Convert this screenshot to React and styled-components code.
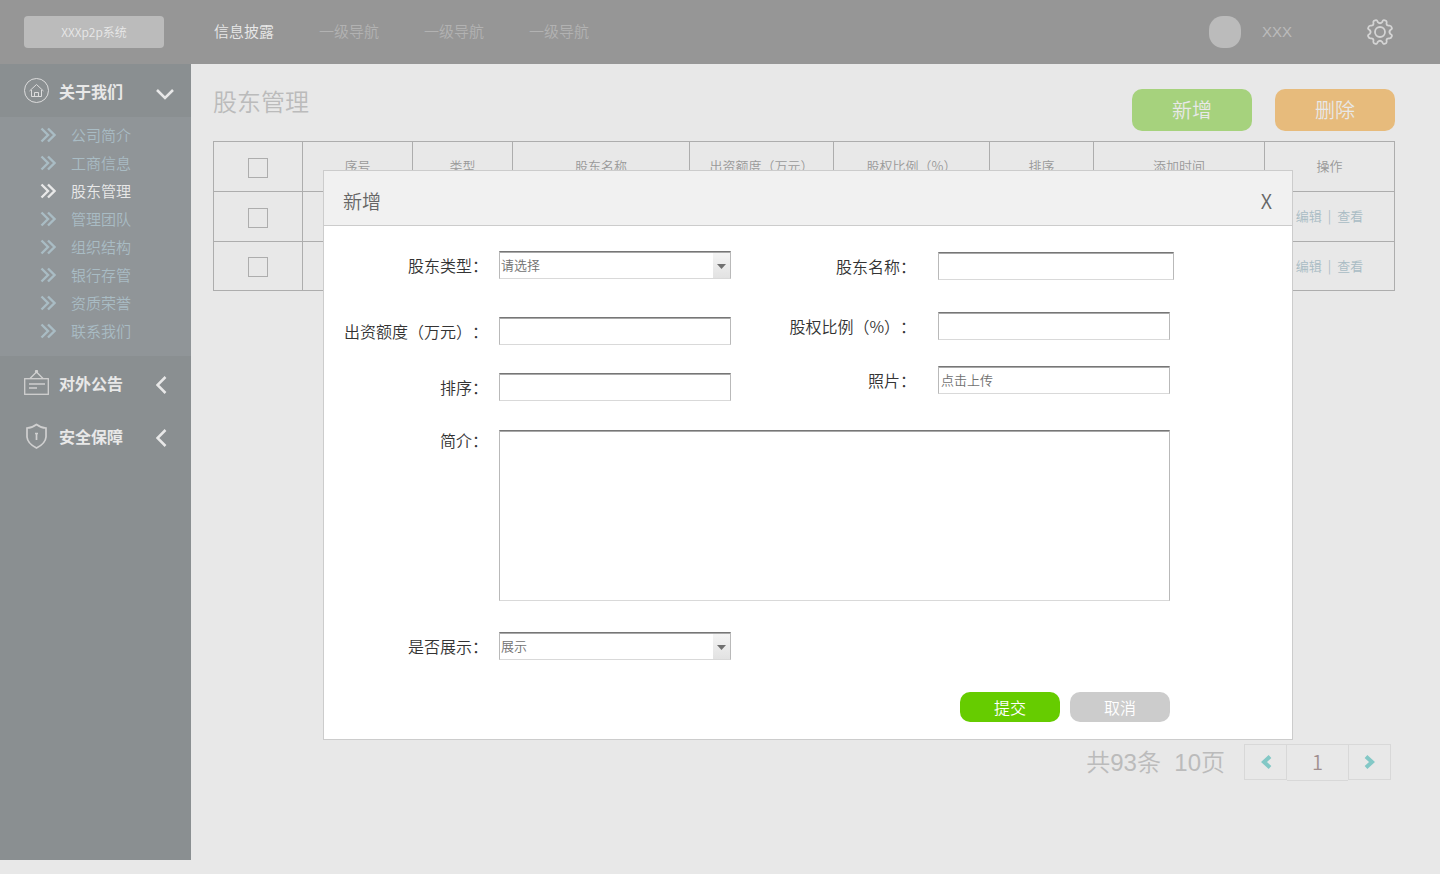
import React, { useState } from "react";
import styled, { createGlobalStyle } from "styled-components";

const GlobalStyle = createGlobalStyle`
  * {
    box-sizing: border-box;
  }

  body {
    margin: 0;
    background-color: #e8e8e8;
    font-family: "Noto Sans CJK SC", sans-serif;
    font-weight: 350;
    text-spacing-trim: space-all;
  }

  button,
  input,
  select,
  textarea {
    font-family: inherit;
    font-weight: inherit;
  }

  a {
    text-decoration: none;
  }
`;

const navItems = ["信息披露", "一级导航", "一级导航", "一级导航"];

const aboutItems = [
  "公司简介",
  "工商信息",
  "股东管理",
  "管理团队",
  "组织结构",
  "银行存管",
  "资质荣誉",
  "联系我们",
];

const columns = [
  { title: "序号", width: 110 },
  { title: "类型", width: 100 },
  { title: "股东名称", width: 177 },
  { title: "出资额度（万元）", width: 144 },
  { title: "股权比例（%）", width: 156 },
  { title: "排序", width: 104 },
  { title: "添加时间", width: 171 },
  { title: "操作", width: 130 },
];

const GearIcon = () => (
  <svg width="28" height="28" viewBox="0 0 28 28" fill="none" stroke="#d4d4d4" strokeWidth="1.8" strokeLinejoin="round">
    <path d="M11.6 3.9 Q14 6.6 16.4 3.9 Q17 1.4 19 2.4 L20.3 3 Q21 3.6 20.5 6 Q20.8 8 23.6 7.6 Q25 7.6 25.8 9.6 Q26.4 11 24.4 12 Q22.4 14 24.4 16 Q26.4 17 25.8 18.4 Q25 20.4 23.6 20.4 Q20.8 20 20.5 22 Q21 24.4 20.3 25 L19 25.6 Q17 26.6 16.4 24.1 Q14 21.4 11.6 24.1 Q11 26.6 9 25.6 L7.7 25 Q7 24.4 7.5 22 Q7.2 20 4.4 20.4 Q3 20.4 2.2 18.4 Q1.6 17 3.6 16 Q5.6 14 3.6 12 Q1.6 11 2.2 9.6 Q3 7.6 4.4 7.6 Q7.2 8 7.5 6 Q7 3.6 7.7 3 L9 2.4 Q11 1.4 11.6 3.9 Z" />
    <circle cx="14" cy="14" r="5" />
  </svg>
);

const HomeIcon = () => (
  <svg width="25" height="25" viewBox="0 0 25 25" fill="none" stroke="#dcdcdc">
    <circle cx="12.5" cy="12.5" r="12" />
    <path d="M5.5 13 L12.5 6.5 L19.5 13 M7.5 12 V18.5 H17.5 V12 M10.5 18.5 V14.5 H14.5 V18.5" />
  </svg>
);

const NoticeIcon = () => (
  <svg width="25" height="26" viewBox="0 0 25 26" fill="none" stroke="#d0d0d0" strokeWidth="1.3">
    <rect x="0.7" y="8.7" width="23.6" height="15.6" />
    <path d="M6 8.5 L12.5 2 L19 8.5 M5 14 H21 M5 18 H13" />
    <circle cx="12.5" cy="1.5" r="1" fill="#d0d0d0" />
  </svg>
);

const ShieldIcon = () => (
  <svg width="25" height="26" viewBox="0 0 25 26" fill="none" stroke="#d0d0d0" strokeWidth="1.7">
    <path d="M12.5 1.5 Q17 5 22 5 V14 Q21.5 20.5 12.5 25 Q3.5 20.5 3 14 V5 Q8 5 12.5 1.5 Z" />
    <path d="M12.5 10 V17 M11 10.5 H14" />
  </svg>
);

const DownIcon = () => (
  <svg width="18" height="18" viewBox="0 0 18 18" fill="none" stroke="#e8e8e8" strokeWidth="2.5">
    <path d="M1 8 L9 16 L17 8" />
  </svg>
);

const BackIcon = () => (
  <svg width="18" height="22" viewBox="0 0 18 22" fill="none" stroke="#e8e8e8" strokeWidth="2.5">
    <path d="M9.5 5 L1.5 13 L9.5 21" />
  </svg>
);

const DoubleArrow = () => (
  <svg width="16" height="16" viewBox="0 0 16 16" fill="none" stroke="currentColor" strokeWidth="2.4">
    <path d="M1.5 1.5 L8 8 L1.5 14.5 M8 1.5 L14.5 8 L8 14.5" />
  </svg>
);

const PageArrow = ({ next }) => (
  <svg width="12" height="16" viewBox="0 0 12 16" fill="none" stroke="#83c8c6" strokeWidth="4">
    <path d={next ? "M2 2.5 L8 8 L2 13.5" : "M10 2.5 L4 8 L10 13.5"} />
  </svg>
);

const Sidebar = () => (
  <Side>
    <GroupButton type="button">
      <HomeIcon />
      <GroupName>关于我们</GroupName>
      <DownIcon />
    </GroupButton>
    <SubMenu>
      {aboutItems.map((item) => (
        <li key={item}>
          <SubLink href="#" $active={item === "股东管理"}>
            <DoubleArrow />
            {item}
          </SubLink>
        </li>
      ))}
    </SubMenu>
    <GroupButton type="button">
      <NoticeIcon />
      <GroupName>对外公告</GroupName>
      <BackIcon />
    </GroupButton>
    <GroupButton type="button">
      <ShieldIcon />
      <GroupName>安全保障</GroupName>
      <BackIcon />
    </GroupButton>
  </Side>
);

const ShareholderTable = () => (
  <Table>
    <colgroup>
      <col style={{ width: 89 }} />
      {columns.map((column) => (
        <col key={column.title} style={{ width: column.width }} />
      ))}
    </colgroup>
    <thead>
      <tr>
        <th>
          <Check type="checkbox" aria-label="全选" />
        </th>
        {columns.map((column) => (
          <th key={column.title}>{column.title}</th>
        ))}
      </tr>
    </thead>
    <tbody>
      {[1, 2].map((row) => (
        <tr key={row}>
          <td>
            <Check type="checkbox" aria-label={`选择 ${row}`} />
          </td>
          {columns.slice(1).map((column) => (
            <td key={column.title} />
          ))}
          <td>
            <Actions>
              <a href="#">编辑</a>|<a href="#">查看</a>
            </Actions>
          </td>
        </tr>
      ))}
    </tbody>
  </Table>
);

const AddDialog = () => {
  const [type, setType] = useState("请选择");
  const [visible, setVisible] = useState("展示");

  return (
    <Overlay>
      <Dialog role="dialog" aria-labelledby="dialog-title">
        <DialogHeader>
          <DialogTitle id="dialog-title">新增</DialogTitle>
          <CloseButton type="button">X</CloseButton>
        </DialogHeader>
        <Form>
          <Columns>
            <LeftColumn>
              <Field $space={38}>
                <Label htmlFor="type">股东类型：</Label>
                <SelectBox id="type" value={type} onChange={(event) => setType(event.target.value)} />
              </Field>
              <Field $space={28}>
                <Label htmlFor="amount">出资额度（万元）：</Label>
                <Input id="amount" type="text" />
              </Field>
              <Field $space={29}>
                <Label htmlFor="order">排序：</Label>
                <Input id="order" type="text" />
              </Field>
            </LeftColumn>
            <RightColumn>
              <Field $space={32}>
                <Label htmlFor="name" $wide>股东名称：</Label>
                <Input id="name" type="text" $long />
              </Field>
              <Field $space={26}>
                <Label htmlFor="ratio" $wide>股权比例（%）：</Label>
                <Input id="ratio" type="text" />
              </Field>
              <Field>
                <Label htmlFor="photo" $wide>照片：</Label>
                <Input id="photo" type="text" placeholder="点击上传" />
              </Field>
            </RightColumn>
          </Columns>
          <Field $space={31} $top>
            <Label htmlFor="intro">简介：</Label>
            <TextArea id="intro" />
          </Field>
          <Field $space={32}>
            <Label htmlFor="visible">是否展示：</Label>
            <SelectBox id="visible" value={visible} onChange={(event) => setVisible(event.target.value)} />
          </Field>
          <FormButtons>
            <FormButton type="button" $color="#66cc00">提交</FormButton>
            <FormButton type="button" $color="#cccccc">取消</FormButton>
          </FormButtons>
        </Form>
      </Dialog>
    </Overlay>
  );
};

const SelectBox = ({ id, value, onChange }) => (
  <SelectWrap>
    <Select id={id} value={value} onChange={onChange}>
      <option>{value}</option>
    </Select>
    <SelectArrow aria-hidden="true">
      <svg width="9" height="5" viewBox="0 0 9 5">
        <path d="M0 0 H9 L4.5 5 Z" fill="#707070" />
      </svg>
    </SelectArrow>
  </SelectWrap>
);

const App = () => (
  <React.Fragment>
    <GlobalStyle />
    <Header>
      <Logo>XXXp2p系统</Logo>
      <Nav>
        {navItems.map((item, index) => (
          <NavLink key={index} href="#" $active={index === 0}>
            {item}
          </NavLink>
        ))}
      </Nav>
      <Avatar />
      <UserName>XXX</UserName>
      <IconButton type="button" aria-label="设置">
        <GearIcon />
      </IconButton>
    </Header>
    <Body>
      <Sidebar />
      <Main>
        <TitleBar>
          <Title>股东管理</Title>
          <ActionButton type="button" $color="#a6d27d">新增</ActionButton>
          <ActionButton type="button" $color="#e7bb7c">删除</ActionButton>
        </TitleBar>
        <ShareholderTable />
        <Pager>
          <PagerText>共93条&nbsp; 10页</PagerText>
          <PageButton type="button" aria-label="上一页">
            <PageArrow />
          </PageButton>
          <PageNumber>1</PageNumber>
          <PageButton type="button" aria-label="下一页">
            <PageArrow next />
          </PageButton>
        </Pager>
      </Main>
    </Body>
    <AddDialog />
  </React.Fragment>
);

const Header = styled.header`
  display: flex;
  align-items: center;
  height: 64px;
  padding: 0 46px 0 24px;
  background-color: #969696;
`;

const Logo = styled.div`
  width: 140px;
  height: 32px;
  border-radius: 4px;
  background-color: #bbbbbb;
  color: #e8e8e8;
  font-size: 12px;
  line-height: 31px;
  text-align: center;
`;

const Nav = styled.nav`
  display: flex;
  flex: 1;
  gap: 45px;
  padding: 0 0 2px 50px;
`;

const NavLink = styled.a`
  color: ${({ $active }) => ($active ? "#e8e8e8" : "#b2b2b2")};
  font-size: 15px;
  line-height: 24px;
`;

const Avatar = styled.div`
  width: 32px;
  height: 32px;
  border-radius: 14px;
  background-color: #bbbbbb;
`;

const UserName = styled.span`
  width: 125px;
  padding-left: 21px;
  color: #bbbbbb;
  font-family: "Liberation Sans", sans-serif;
  font-size: 15px;
  line-height: 24px;
`;

const IconButton = styled.button`
  display: flex;
  padding: 0;
  border: none;
  background: none;
  cursor: pointer;
`;

const Body = styled.div`
  display: flex;
  min-height: calc(100vh - 78px);
`;

const Side = styled.aside`
  flex: none;
  width: 191px;
  background-color: #8a8f91;
`;

const GroupButton = styled.button`
  display: flex;
  align-items: center;
  width: 100%;
  height: 53px;
  padding: 0 17px 0 24px;
  border: none;
  background: none;
  color: #e8e8e8;
  font-size: 16px;
  cursor: pointer;
`;

const GroupName = styled.span`
  flex: 1;
  padding-left: 10px;
  font-weight: 700;
  text-align: left;
`;

const SubMenu = styled.ul`
  margin: 0;
  padding: 4px 0 11px;
  background-color: #909598;
  list-style: none;
`;

const SubLink = styled.a`
  display: flex;
  align-items: center;
  gap: 15px;
  height: 28px;
  padding-left: 40px;
  color: ${({ $active }) => ($active ? "#e8e8e8" : "#a9bcc4")};
  font-size: 15px;
  line-height: 20px;
`;

const Main = styled.main`
  display: flex;
  flex: 1;
  flex-direction: column;
  padding: 25px 45px 79px 22px;
`;

const TitleBar = styled.div`
  display: flex;
  gap: 23px;
  margin-bottom: 10px;
`;

const Title = styled.h1`
  flex: 1;
  margin: 0;
  color: #bbbbbb;
  font-size: 24px;
  font-weight: 350;
  line-height: 24px;
`;

const ActionButton = styled.button`
  width: 120px;
  height: 42px;
  padding: 0 0 2px;
  border: none;
  border-radius: 10px;
  background-color: ${({ $color }) => $color};
  color: #e8e8e8;
  font-size: 20px;
  cursor: pointer;
`;

const Table = styled.table`
  width: 100%;
  border-collapse: collapse;
  table-layout: fixed;
  color: #999999;
  font-size: 13px;

  th,
  td {
    height: 50px;
    padding: 0 0 2px;
    border: 1px solid #adadad;
    font-weight: 350;
    text-align: center;
  }

  tr:last-child td {
    height: 49px;
  }

  thead th {
    height: 50px;
  }
`;

const Check = styled.input`
  display: block;
  width: 20px;
  height: 20px;
  margin: 4px auto 0;
  border: 1px solid #adadad;
  appearance: none;
`;

const Actions = styled.div`
  display: flex;
  justify-content: center;
  gap: 6px;
  color: #a9bcc4;

  a {
    color: inherit;
  }
`;

const Pager = styled.div`
  display: flex;
  justify-content: flex-end;
  margin-top: auto;
  padding-right: 4px;
`;

const PagerText = styled.span`
  padding-right: 19px;
  color: #bbbbbb;
  font-family: "Liberation Sans", "Noto Sans CJK SC", sans-serif;
  font-size: 24px;
  line-height: 37px;
`;

const PageButton = styled.button`
  display: flex;
  align-items: center;
  justify-content: center;
  width: 43px;
  height: 36px;
  padding: 0;
  border: 1px solid #d8d8d8;
  background: none;
  cursor: pointer;
`;

const PageNumber = styled.span`
  width: 61px;
  height: 37px;
  border: 1px solid #d8d8d8;
  border-width: 1px 0;
  color: #a08f8f;
  font-size: 20px;
  line-height: 34px;
  text-align: center;
`;

const Overlay = styled.div`
  position: fixed;
  inset: 0;
  padding: 170px 147px 0 323px;
`;

const Dialog = styled.section`
  border: 1px solid #cccccc;
  background-color: #ffffff;
`;

const DialogHeader = styled.div`
  display: flex;
  align-items: center;
  justify-content: space-between;
  height: 55px;
  padding: 4px 20px 0 19px;
  border-bottom: 1px solid #cccccc;
  background-color: #f1f1f1;
`;

const DialogTitle = styled.h2`
  margin: 0;
  color: #666666;
  font-size: 19px;
  font-weight: 350;
`;

const CloseButton = styled.button`
  padding: 0;
  border: none;
  background: none;
  color: #666666;
  font-size: 20px;
  cursor: pointer;
`;

const Form = styled.form`
  padding: 25px 0 17px;
`;

const Columns = styled.div`
  display: flex;
`;

const LeftColumn = styled.div`
  width: 407px;
`;

const RightColumn = styled.div`
  flex: 1;
  padding-top: 1px;
`;

const Field = styled.div`
  display: flex;
  align-items: ${({ $top }) => ($top ? "flex-start" : "center")};
  margin-bottom: ${({ $space }) => $space || 0}px;
`;

const Label = styled.label`
  flex: none;
  width: ${({ $wide }) => ($wide ? 207 : 175)}px;
  padding-right: ${({ $wide }) => ($wide ? 22 : 11)}px;
  color: #333333;
  font-size: 16px;
  line-height: 20px;
  text-align: right;
`;

const Input = styled.input`
  width: ${({ $long }) => ($long ? 236 : 232)}px;
  height: 28px;
  padding: 0 2px 2px;
  border: 1px solid #b9b9b9;
  border-top-color: #767676;
  border-bottom-color: #d9d9d9;
  outline: none;
  box-shadow: inset 0 1px #a9a9a9;
  background-color: #ffffff;
  color: #707070;
  font-size: 13px;

  &::placeholder {
    color: #707070;
    opacity: 1;
  }
`;

const SelectWrap = styled.div`
  display: grid;
  grid-template-columns: 1fr 17px;
  width: 232px;
  height: 28px;
  padding-top: 1px;
  border: 1px solid #b9b9b9;
  border-top-color: #767676;
  border-bottom-color: #d9d9d9;
  box-shadow: inset 0 1px #a9a9a9;
`;

const Select = styled.select`
  grid-row: 1;
  grid-column: 1 / 3;
  padding: 0 1px 3px;
  border: none;
  outline: none;
  background: none;
  color: #707070;
  font-size: 13px;
  appearance: none;
`;

const SelectArrow = styled.span`
  display: flex;
  grid-row: 1;
  grid-column: 2;
  align-items: center;
  justify-content: center;
  padding-top: 2px;
  background: linear-gradient(#f4f4f4, #e2e2e2);
  pointer-events: none;
`;

const TextArea = styled.textarea`
  width: 671px;
  height: 171px;
  border: 1px solid #b9b9b9;
  border-top-color: #767676;
  border-bottom-color: #d9d9d9;
  outline: none;
  box-shadow: inset 0 1px #a9a9a9;
  resize: none;
`;

const FormButtons = styled.div`
  display: flex;
  justify-content: flex-end;
  gap: 10px;
  padding-right: 122px;
`;

const FormButton = styled.button`
  width: 100px;
  height: 30px;
  padding: 0;
  border: none;
  border-radius: 10px;
  background-color: ${({ $color }) => $color};
  color: #ffffff;
  font-size: 16px;
  cursor: pointer;
`;

export default App;
